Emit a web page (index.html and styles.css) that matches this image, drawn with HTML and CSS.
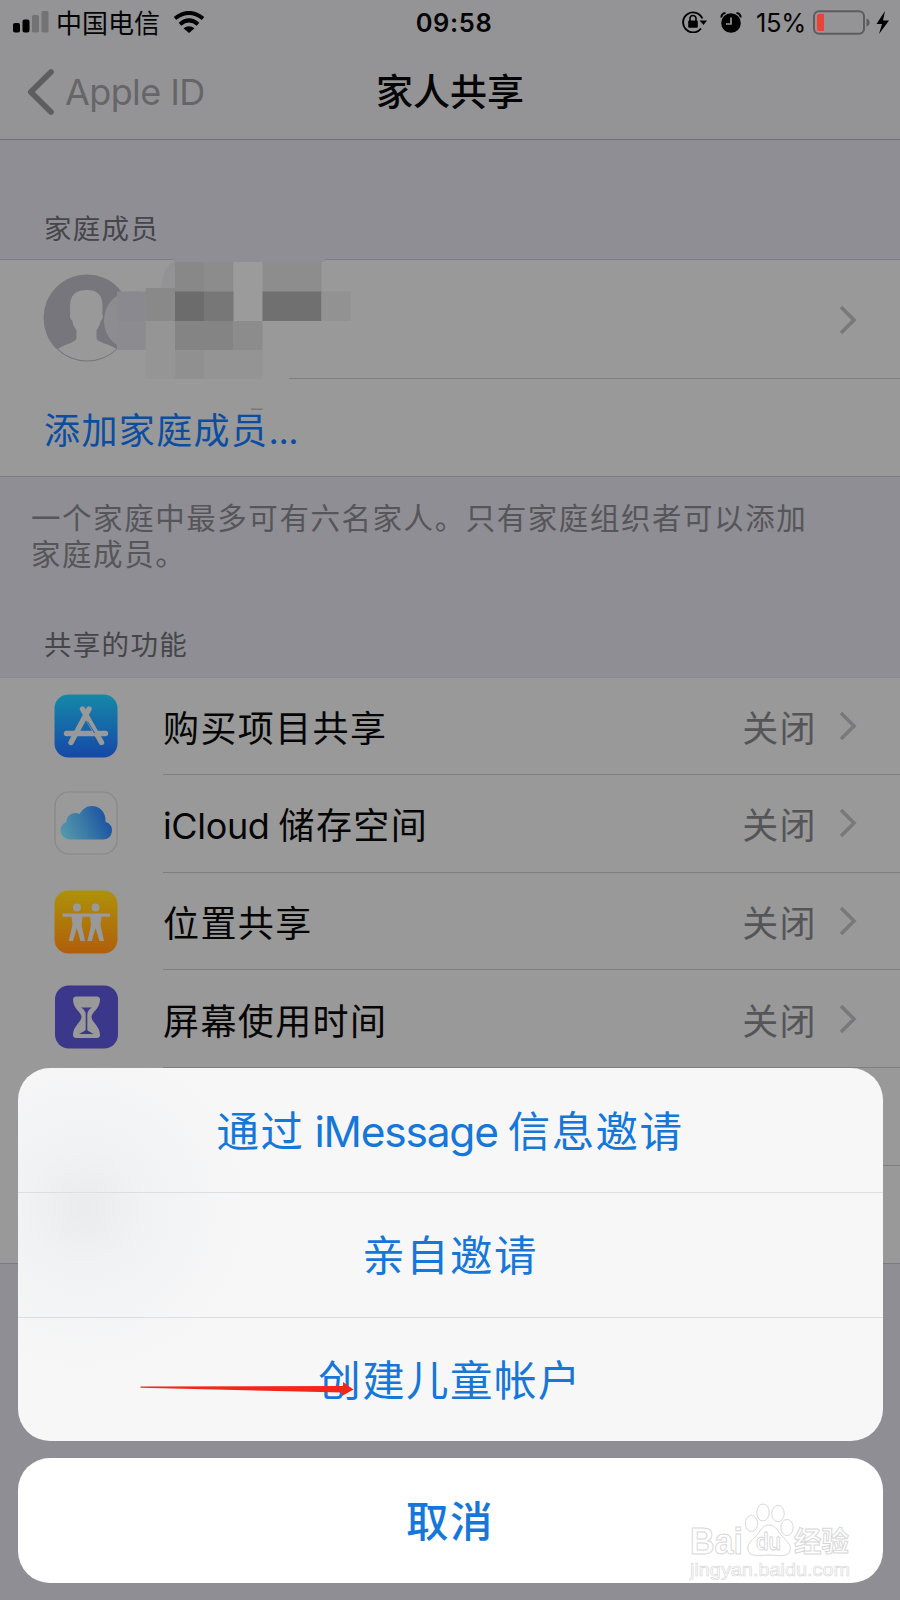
FILE: index.html
```html
<!DOCTYPE html>
<html lang="zh-CN">
<head>
<meta charset="utf-8">
<title>家人共享</title>
<link rel="stylesheet" href="styles.css">
</head>
<body>
<div class="screen">
  <header class="nav">
    <div class="status">
      <div class="status-left">
        <svg class="signal" width="36" height="22" viewBox="0 0 36 22"><rect x="0" y="12" width="7" height="9.500" rx="2"/><rect x="9.500" y="8.500" width="7" height="13" rx="2"/><g fill="#737376"><rect x="19" y="4" width="7" height="17.500" rx="1.500"/><rect x="28.500" y="0" width="7" height="21.500" rx="1.500"/></g></svg>
        <span class="carrier">中国电信</span>
        <svg class="wifi" width="32" height="23" viewBox="0 0 32 23"><g fill="none" stroke="#000" stroke-width="4"><path d="M2 7.500Q16-3.500 30 7.500"/><path d="M7 13.300Q16 5.500 25 13.300"/></g><path d="M10.500 17.300Q16 13 21.500 17.300L16 22z"/></svg>
      </div>
      <span class="clock">09:58</span>
      <div class="status-right">
        <svg class="lock" width="25" height="22" viewBox="0 0 25 22"><path d="M20.300 7.500A10 10 0 1 0 19 17.500" fill="none" stroke="#000" stroke-width="1.900"/><path d="M17.500 9.500h7.500l-3.500 4.500z"/><rect x="6.200" y="9.500" width="9.600" height="7.200" rx="1"/><path d="M8 10V7.500a3 3 0 0 1 6 0V10" fill="none" stroke="#000" stroke-width="1.600"/></svg>
        <svg class="alarm" width="22" height="21" viewBox="0 0 22 21"><circle cx="11" cy="11" r="9.800"/><path d="M1.300 5.500Q1.500 1.500 5.500 1M20.700 5.500Q20.500 1.500 16.500 1" fill="none" stroke="#000" stroke-width="2"/><path d="M11 5.500V12H6" fill="none" stroke="#949496" stroke-width="1.700"/></svg>
        <span class="percent">15%</span>
        <svg class="battery" width="78" height="25" viewBox="0 0 78 25"><rect x="1" y="1.200" width="50" height="22.500" rx="5" fill="none" stroke="#5c5c5e" stroke-width="2"/><path d="M4 6q0-2 2-2h5v17H6q-2 0-2-2z" fill="#ed4337"/><path d="M53.500 8.500q3 1 3 4t-3 4z" fill="#5c5c5e"/><path d="M72 1 63.500 14h5.500l-3 10 10-13.500h-6z"/></svg>
      </div>
    </div>
    <div class="titlebar">
      <div class="back"><svg width="28" height="46" viewBox="0 0 28 46"><path d="M24 3 3.800 23 24 43" fill="none" stroke="#5d5d5f" stroke-width="5.600" stroke-linecap="round" stroke-linejoin="round"/></svg><span>Apple ID</span></div>
      <h1>家人共享</h1>
    </div>
  </header>

  <h2 class="heading members-heading">家庭成员</h2>
  <section class="members">
    <div class="member">
      <svg class="avatar" width="88" height="88" viewBox="0 0 88 88"><circle cx="44" cy="44" r="43.500" fill="#77767c"/><path d="M44 16c-12 0-17 6-17 16 0 3 .3 6 .3 8-1 2 .2 6 2.200 7 .5 5 2.500 7 4 9v8c-1 5-10 5-18.500 11A43 43 0 0 0 73.500 75C65 69 54.500 69 53.500 64v-8c2-2 3.500-5 4-9 2-1 3-5 1.700-7 .2-2 .3-5 .3-8C59.500 22 55 16 44 16z" fill="#999"/></svg>
      <svg class="mosaic" width="360" height="170" viewBox="100 248 360 170">
        <rect x="173" y="257" width="152" height="5" fill="#8f8e94"/>
        <path d="M175 262h-3q-10 8-11 29h14z" fill="#939395"/>
        <rect x="104" y="291" width="60" height="59" rx="29" fill="#8d8c91"/>
        <rect x="117" y="291.500" width="29" height="29.500" fill="#8a898f"/><rect x="117" y="321" width="29" height="29" fill="#8b8b90"/>
        <rect x="145.700" y="288" width="29.300" height="33" fill="#898989"/><rect x="145.700" y="321" width="29.300" height="29" fill="#959595"/>
        <rect x="175" y="262" width="29" height="30" fill="#888"/><rect x="204" y="262" width="29.500" height="30" fill="#8c8c8c"/><rect x="233.500" y="262" width="29" height="59" fill="#9b9b9b"/><rect x="262.500" y="262" width="59" height="30" fill="#8d8d8d"/>
        <rect x="175" y="291.500" width="29" height="29.500" fill="#6c6c6c"/><rect x="204" y="291.500" width="29.500" height="29.500" fill="#777"/><rect x="262.500" y="291.500" width="59" height="29.500" fill="#707070"/><rect x="321.500" y="291.500" width="29" height="29.500" fill="#929292"/>
        <rect x="175" y="321" width="58.500" height="29" fill="#848484"/><rect x="233.500" y="321" width="29" height="29" fill="#8c8c8c"/>
        <rect x="145.700" y="350" width="29.300" height="29" fill="#959595"/><rect x="175" y="350" width="29" height="29" fill="#909090"/><rect x="204" y="350" width="58.500" height="29" fill="#949494"/>
        <rect x="251" y="408.500" width="11.500" height="1.500" fill="#777"/>
      </svg>
      <svg class="chevron" width="18" height="30" viewBox="0 0 18 30"><path d="M2 2 15 15 2 28"/></svg>
    </div>
    <div class="add">添加家庭成员<span class="dots">...</span></div>
  </section>
  <p class="note">一个家庭中最多可有六名家人。只有家庭组织者可以添加家庭成员。</p>
  <h2 class="heading features-heading">共享的功能</h2>

  <section class="features">
    <div class="row">
      <svg class="icon" width="64" height="64" viewBox="0 0 64 64"><defs><linearGradient id="store" x2="0" y2="1"><stop stop-color="#1588a8"/><stop offset="1" stop-color="#1648a8"/></linearGradient></defs><rect x=".5" y=".5" width="63" height="63" rx="14" fill="url(#store)"/><g stroke="#999" stroke-width="5.400" stroke-linecap="round"><path d="M12.500 39.500H51.500"/><path d="M35 15 17 48.500"/><path d="M28.500 15 47.500 48.500"/></g><path d="M33.500 27.500 40.500 39" stroke="#1467b3" stroke-width="1"/></svg>
      <div class="cell"><span>购买项目共享</span><span class="value">关闭</span><svg class="chevron" width="18" height="30" viewBox="0 0 18 30"><path d="M2 2 15 15 2 28"/></svg></div>
    </div>
    <div class="row">
      <svg class="icon" width="64" height="64" viewBox="0 0 64 64"><defs><linearGradient id="cloud" x1="0" y1=".8" x2="1" y2=".5"><stop stop-color="#5798ad"/><stop offset=".5" stop-color="#3878a6"/><stop offset="1" stop-color="#1a50a2"/></linearGradient></defs><rect x="1" y="1" width="62" height="62" rx="14" fill="#9a9a9a" stroke="#888" stroke-width="1.200"/><path d="M17 48.500C10 48.500 6.500 44 6.500 39.500c0-5 3-7.500 6-8.500 0-7 7-11 13-8 3-5 7-8 12-8 8 0 14 6 14 14v2c4 1 6.500 4 6.500 8 0 5-3 9.500-9 9.500z" fill="url(#cloud)"/></svg>
      <div class="cell"><span><b class="icloud">iCloud</b>储存空间</span><span class="value">关闭</span><svg class="chevron" width="18" height="30" viewBox="0 0 18 30"><path d="M2 2 15 15 2 28"/></svg></div>
    </div>
    <div class="row">
      <svg class="icon" width="64" height="64" viewBox="0 0 64 64"><defs><linearGradient id="people" x2="0" y2="1"><stop stop-color="#ad9209"/><stop offset="1" stop-color="#b15e0b"/></linearGradient></defs><rect x=".5" y=".5" width="63" height="63" rx="14" fill="url(#people)"/><g fill="#999"><circle cx="23" cy="17.500" r="4"/><circle cx="41.500" cy="17.500" r="4"/><path d="M8.500 23.500H56v3.200H47.500L46.500 35 50 51h-4.500L41.500 38 37.800 51H33.500L37 35 36 26.700h-7.500L27.500 35 31 51h-4.500L22.800 38 19 51h-4.300L18.500 35 17.500 26.700h-9z"/></g></svg>
      <div class="cell"><span>位置共享</span><span class="value">关闭</span><svg class="chevron" width="18" height="30" viewBox="0 0 18 30"><path d="M2 2 15 15 2 28"/></svg></div>
    </div>
    <div class="row">
      <svg class="icon hourglass" width="64" height="64" viewBox="0 0 64 64"><rect x="1" y=".5" width="63" height="63" rx="14" fill="#3b378b"/><path d="M22.500 11.500h20q3.500 0 3.500 3C46 24 37.500 27 37.500 32S46 41 46 50q0 3-3.500 3H22.500q-3.500 0-3.500-3C19 41 27.500 37 27.500 32s-8.500-8-8.500-17.500q0-3 3.500-3z" fill="#999"/><path d="M27 22.500h11Q33.700 25 33.300 29v16q1.500 1.700 6.700 4H25q5-2.300 6.700-4V29Q31.300 25 27 22.500z" fill="#3b378b"/></svg>
      <div class="cell"><span>屏幕使用时间</span><span class="value">关闭</span><svg class="chevron" width="18" height="30" viewBox="0 0 18 30"><path d="M2 2 15 15 2 28"/></svg></div>
    </div>
    <div class="row"><div class="cell"></div></div>
    <div class="row"></div>
  </section>

  <div class="sheet">
    <div class="actions">
      <div class="action">通过<b class="imessage">iMessage</b>信息邀请</div>
      <div class="action">亲自邀请</div>
      <div class="action">创建儿童帐户</div>
    </div>
    <div class="action cancel">取消</div>
  </div>

  <svg class="arrow" width="216" height="18" viewBox="0 0 216 18"><path d="M.5 6.500 203 6v-4L213.500 9.500 202 16v-3.500L.5 7.700z" fill="#f3261c"/></svg>
  <svg class="watermark" width="170" height="84" viewBox="0 0 170 84">
    <g fill="#fff" stroke="#d8d8d8" stroke-width="1">
      <text class="mark-word" x="2" y="53" textLength="53" lengthAdjust="spacingAndGlyphs">Bai</text>
      <ellipse cx="63.500" cy="22.500" rx="6.200" ry="8"/><ellipse cx="75" cy="11.500" rx="6.200" ry="8.500"/><ellipse cx="90" cy="12.500" rx="6.200" ry="8.200"/><ellipse cx="99" cy="26.500" rx="6.200" ry="8"/>
      <path d="M81 24c-7 0-9 7-13 11-5 5-9 8-8 14 2 8 13 5 21 5s19 3 21-4c2-7-4-10-8-15-4-4-6-11-13-11z"/>
      <text class="mark-du" x="68" y="49" textLength="25" lengthAdjust="spacingAndGlyphs">du</text>
      <text class="mark-cn" x="106" y="51" textLength="55" lengthAdjust="spacingAndGlyphs">经验</text>
      <text class="mark-url" x="2" y="75" textLength="160" lengthAdjust="spacingAndGlyphs">jingyan.baidu.com</text>
    </g>
  </svg>
</div>
</body>
</html>
```

FILE: styles.css
```css
* { box-sizing: border-box; }
body { margin: 0; }
.screen {
  position: relative;
  width: 900px;
  height: 1600px;
  overflow: hidden;
  background: #8f8e94;
  color: #050506;
  font-family: Inter, "Noto Sans CJK SC", sans-serif;
  font-size: 36px;
}
svg { display: block; flex: none; }
h1, h2, p { margin: 0; font-weight: 400; }
b { font-weight: 400; }

.nav { height: 140px; background: #949496; border-bottom: 1px solid #737277; }
.status {
  display: grid;
  grid-template-columns: 1fr auto 1fr;
  align-items: center;
  height: 44px;
  padding: 0 9px 0 13px;
  line-height: 40px;
}
.status-left, .status-right { display: flex; align-items: center; }
.status-right { justify-content: flex-end; }
.carrier { margin-left: 7px; padding-top: 3px; font-size: 26px; }
.wifi { margin-left: 13px; }
.clock { position: relative; left: 2px; padding-top: 2px; font-size: 25.5px; font-weight: 600; letter-spacing: .6px; }
.lock { margin-right: 13px; }
.alarm { margin-right: 14px; }
.percent { padding-top: 2px; font-size: 25.5px; letter-spacing: -.3px; }
.battery { margin-left: 7px; }
.titlebar { display: grid; grid-template-columns: 1fr auto 1fr; height: 96px; align-items: center; padding-left: 27px; padding-right: 27px; }
.back { display: flex; align-items: center; gap: 10px; color: #666668; line-height: 46px; letter-spacing: -.6px; }
h1 { padding-top: 2px; font-size: 37px; font-weight: 500; line-height: 92px; }

.heading { padding-left: 44px; font-size: 27.5px; letter-spacing: 1.3px; color: #464549; line-height: 40px; }
.members-heading { height: 119px; padding-top: 69px; }
.members { height: 218px; background: #999; border-top: 1px solid #7c7b84; border-bottom: 1px solid #7c7b84; }
.member { position: relative; display: flex; justify-content: space-between; align-items: center; height: 119px; padding: 0 43px 0 43px; }
.member::after { content: ""; position: absolute; left: 289px; right: 0; bottom: 0; height: 1px; background: #7e7e80; }
.avatar { margin-bottom: 3px; }
.mosaic { position: absolute; left: 100px; top: -12px; z-index: 1; }
.chevron { fill: none; stroke: #79797c; stroke-width: 3.6; }
.add { padding: 2px 0 0 44px; line-height: 100px; letter-spacing: 1.4px; color: #0c4d9f; }
.dots { letter-spacing: -.4px; }
.note { height: 145px; padding: 23px 80px 0 31px; font-size: 29.5px; line-height: 36.2px; letter-spacing: 1.55px; color: #565559; }
.features-heading { height: 55px; padding-top: 3px; }

.features { background: #999; border-top: 1px solid #8a898f; border-bottom: 1px solid #7c7b84; }
.row { display: flex; height: 97.7px; padding-left: 54px; }
.row:first-child { height: 97px; }
.icon { margin-top: 16px; }
.row:nth-child(3) .icon { margin-top: 17px; }
.hourglass { margin-top: 15px; }
.cell { display: flex; align-items: center; flex: 1; margin-left: 45px; padding-right: 43px; border-bottom: 1px solid #7e7e80; letter-spacing: 1.4px; line-height: 96px; }
.cell span { padding-top: 6px; }
.row:nth-child(5) .cell { margin-left: 109px; }
.icloud { margin-right: 9px; letter-spacing: -.35px; }
.value { margin-left: auto; margin-right: 22px; color: #555558; }

.sheet { position: absolute; left: 17.5px; right: 17.5px; top: 1068px; display: flex; flex-direction: column; gap: 17px; }
.actions { border-radius: 32px; overflow: hidden; background: radial-gradient(circle at 66px 140px, #e9ebed 0, rgba(240, 241, 242, .8) 60px, rgba(247, 247, 248, 0) 170px), #f7f7f8; }
.action { display: flex; justify-content: center; height: 124.5px; line-height: 127px; font-size: 42.5px; letter-spacing: 1.4px; color: #1577d9; }
.actions .action:first-child { height: 124px; }
.action + .action { border-top: 1px solid #dcdee2; line-height: 126px; }
.imessage { margin: 0 10px; letter-spacing: -1.2px; }
.cancel { border-radius: 32px; background: #fff; font-weight: 500; }
.arrow { position: absolute; left: 140px; top: 1380px; }
.watermark { position: absolute; left: 688px; top: 1501px; }
.mark-word { font: 700 37px "Liberation Sans", sans-serif; }
.mark-du { font: 600 24px Inter, sans-serif; }
.mark-cn { font: 700 28px "Noto Sans CJK SC", sans-serif; }
.mark-url { font: 400 18px "Liberation Sans", sans-serif; stroke-width: .6; }
```
